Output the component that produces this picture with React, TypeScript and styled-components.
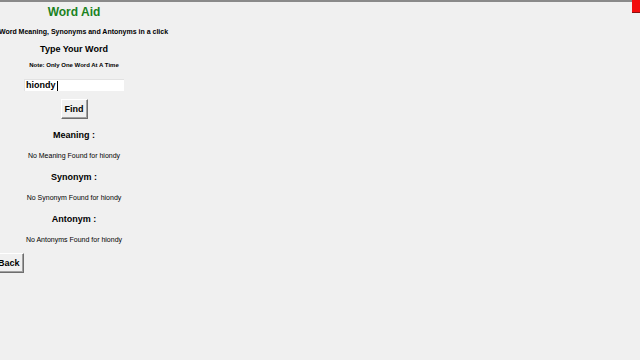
import { FC } from "react";
import styled, { createGlobalStyle } from "styled-components";

const GlobalStyle = createGlobalStyle`
  html, body {
    margin: 0;
    padding: 0;
    background: #f0f0f0;
    width: 640px;
    height: 360px;
    overflow: hidden;
    font-family: "Liberation Sans", Arial, sans-serif;
  }
`;

const TopEdge = styled.div`
  position: relative;
  height: 2px;
  background: #8a8a8a;
  margin-right: 8px;

  & .corner {
    position: absolute;
    top: 0;
    right: -8px;
    width: 8px;
    height: 13px;
    background: #f20d0d;
    border-bottom: 1px solid #8a1010;
    box-sizing: border-box;
  }
`;

const Column = styled.div`
  width: 148px;
  display: flex;
  flex-direction: column;
  align-items: center;
  color: #000;
`;

const Title = styled.h1`
  margin: 0;
  font-size: 12px;
  line-height: 20px;
  font-weight: bold;
  color: #1b821f;
  white-space: nowrap;
`;

const Subtitle = styled.p`
  margin: 5px 0 0 19px;
  font-size: 7px;
  line-height: 10px;
  font-weight: bold;
  white-space: nowrap;
`;

const Heading = styled.h2`
  margin: 6px 0 0;
  font-size: 9px;
  line-height: 12px;
  font-weight: bold;
  white-space: nowrap;
`;

const Note = styled.p`
  margin: 6px 0 0;
  font-size: 6px;
  line-height: 8px;
  font-weight: bold;
  white-space: nowrap;
`;

const WordInput = styled.div`
  margin-top: 10px;
  width: 100px;
  height: 12px;
  box-sizing: border-box;
  background: #fff;
  border-top: 1px solid #e2e2e2;
  border-left: 1px solid #e2e2e2;
  font-size: 9px;
  line-height: 11px;
  font-weight: bold;
  padding-left: 1px;
  display: flex;
  align-items: center;

  & .caret {
    width: 1px;
    height: 10px;
    background: #000;
    margin-left: 1px;
  }
`;

const Button = styled.button`
  margin-top: 8px;
  height: 20px;
  padding: 0 3px;
  box-sizing: border-box;
  background: #f0f0f0;
  border: 1px solid;
  border-color: #ffffff #6e6e6e #6e6e6e #ffffff;
  box-shadow: inset -1px -1px 0 #a0a0a0;
  font-family: "Liberation Sans", Arial, sans-serif;
  font-size: 9px;
  font-weight: bold;
  color: #000;
  line-height: 18px;
`;

const Section = styled.section`
  display: flex;
  flex-direction: column;
  align-items: center;
  margin-top: 4px;
`;

const Result = styled.p`
  margin: 10px 0 0;
  font-size: 7px;
  line-height: 10px;
  white-space: nowrap;
`;

const BackRow = styled.div`
  display: flex;
  margin-left: -6px;
`;

const sections = [
  { title: "Meaning :", text: "No Meaning Found for hiondy" },
  { title: "Synonym :", text: "No Synonym Found for hiondy" },
  { title: "Antonym :", text: "No Antonyms Found for hiondy" },
];

const App: FC = () => {
  return (
    <>
      <GlobalStyle />
      <TopEdge>
        <div className="corner" />
      </TopEdge>
      <Column>
        <Title>Word Aid</Title>
        <Subtitle>Word Meaning, Synonyms and Antonyms in a click</Subtitle>
        <Heading>Type Your Word</Heading>
        <Note>Note: Only One Word At A Time</Note>
        <WordInput>
          hiondy<span className="caret" />
        </WordInput>
        <Button>Find</Button>
        {sections.map((s) => (
          <Section key={s.title}>
            <Heading>{s.title}</Heading>
            <Result>{s.text}</Result>
          </Section>
        ))}
      </Column>
      <BackRow>
        <Button>Back</Button>
      </BackRow>
    </>
  );
};

export default App;
